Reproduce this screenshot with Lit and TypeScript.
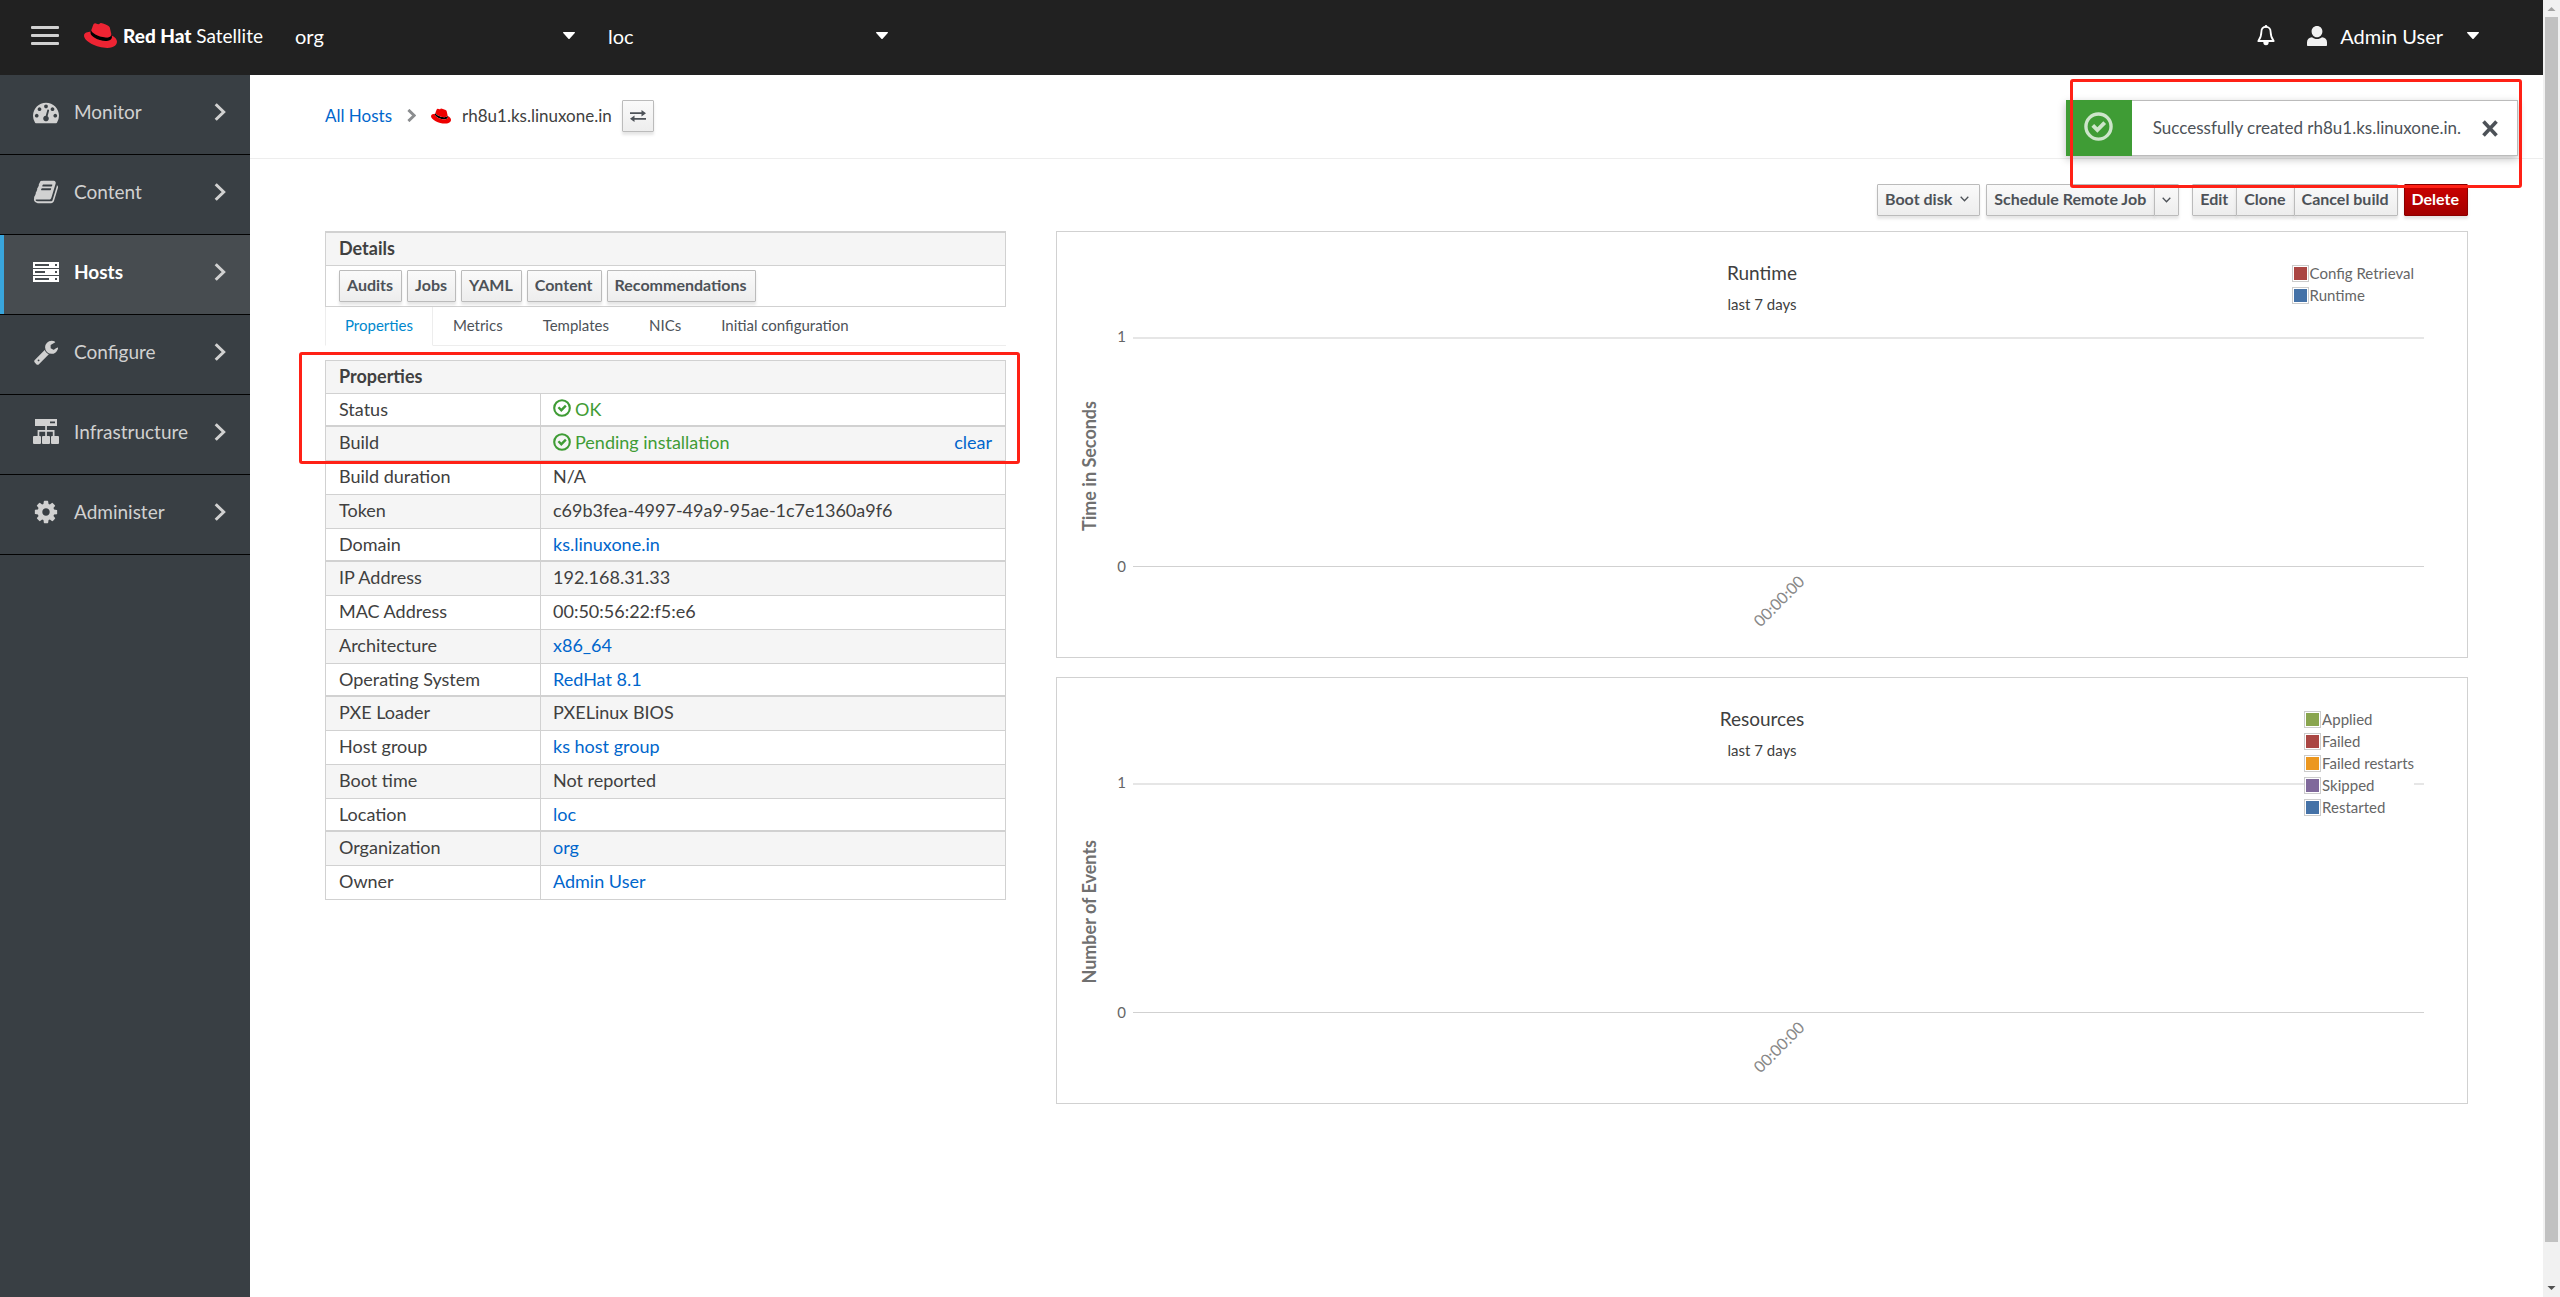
import { LitElement, html, css, svg, nothing, type TemplateResult } from "lit";
import { customElement, property } from "lit/decorators.js";
import { classMap } from "lit/directives/class-map.js";

interface NavItem { label: string; icon: TemplateResult; active?: boolean }
interface Prop { label: string; value: string; kind?: "link" | "ok"; action?: string }
interface Series { name: string; color: string }

const FA = "0 0 1792 1792";

const icons = {
  monitor: svg`<svg class="nav-icon" viewBox=${FA} aria-hidden="true"><path d="M384 1152q0-53-37.5-90.5t-90.5-37.5-90.5 37.5-37.5 90.5 37.5 90.5 90.5 37.5 90.5-37.5 37.5-90.5zm192-448q0-53-37.5-90.5t-90.5-37.5-90.5 37.5-37.5 90.5 37.5 90.5 90.5 37.5 90.5-37.5 37.5-90.5zm428 481l101-382q6-26-7.5-48.5t-38.5-29.5-48 6.5-30 39.5l-101 382q-60 5-107 43.5t-63 98.5q-20 77 20 146t117 89 146-20 89-117q16-60-6-117t-72-91zm660-33q0-53-37.5-90.5t-90.5-37.5-90.5 37.5-37.5 90.5 37.5 90.5 90.5 37.5 90.5-37.5 37.5-90.5zm-640-640q0-53-37.5-90.5t-90.5-37.5-90.5 37.5-37.5 90.5 37.5 90.5 90.5 37.5 90.5-37.5 37.5-90.5zm448 192q0-53-37.5-90.5t-90.5-37.5-90.5 37.5-37.5 90.5 37.5 90.5 90.5 37.5 90.5-37.5 37.5-90.5zm320 448q0 261-141 483-19 29-54 29h-1402q-35 0-54-29-141-221-141-483 0-182 71-348t191-286 286-191 348-71 348 71 286 191 191 286 71 348z"/></svg>`,
  content: svg`<svg class="nav-icon" viewBox=${FA} aria-hidden="true"><path d="M1703 478q40 57 18 129l-275 906q-19 64-76.5 107.5t-122.5 43.5h-923q-77 0-148.5-53.5t-99.5-131.5q-24-67-2-127 0-4 3-27t4-37q1-8-3-21.5t-3-19.5q2-11 8-21t16.5-23.5 16.5-23.5q23-38 45-91.5t30-91.5q3-10 .5-30t-.5-28q3-11 17-28t17-23q21-36 42-92t25-90q1-9-2.5-32t.5-28q4-13 22-30.5t22-22.5q19-26 42.5-84.5t27.5-96.5q1-8-3-25.5t-2-26.5q2-8 9-18t18-23 17-21q8-12 16.5-30.5t15-35 16-36 19.5-32 26.5-23.5 36-11.5 47.5 5.5l-1 3q38-9 51-9h761q74 0 114 56t18 130l-274 906q-36 119-71.5 153.5t-128.5 34.5h-869q-27 0-38 15-11 16-1 43 24 70 144 70h923q29 0 56-15.5t35-41.5l300-987q7-22 5-57 38 15 59 43zm-1064 2q-4 13 2 22.5t20 9.5h608q13 0 25.5-9.5t16.5-22.5l21-64q4-13-2-22.5t-20-9.5h-608q-13 0-25.5 9.5t-16.5 22.5zm-83 256q-4 13 2 22.5t20 9.5h608q13 0 25.5-9.5t16.5-22.5l21-64q4-13-2-22.5t-20-9.5h-608q-13 0-25.5 9.5t-16.5 22.5z"/></svg>`,
  hosts: svg`<svg class="nav-icon" viewBox="0 0 26 26" aria-hidden="true"><path fill-rule="evenodd" d="M0 3h26v6H0zM2 5h14v2H2zM22 5h2v2h-2zM0 10h26v6H0zM2 12h10v2H2zM22 12h2v2h-2zM0 17h26v6H0zM2 19h14v2H2zM22 19h2v2h-2z"/></svg>`,
  configure: svg`<svg class="nav-icon" viewBox=${FA} aria-hidden="true"><path d="M448 1472q0-26-19-45t-45-19-45 19-19 45 19 45 45 19 45-19 19-45zm644-420l-682 682q-37 37-90 37-52 0-91-37l-106-108q-38-36-38-90 0-53 38-91l681-681q39 98 114.5 173.5t173.5 114.5zm634-435q0 39-23 106-47 134-164.5 217.5t-258.5 83.5q-185 0-316.5-131.5t-131.5-316.5 131.5-316.5 316.5-131.5q58 0 121.5 16.5t107.5 46.5q16 11 16 28t-16 28l-293 169v224l193 107q5-3 79-48.5t135.5-81 70.5-35.5q15 0 23.5 10t8.5 25z"/></svg>`,
  infrastructure: svg`<svg class="nav-icon" viewBox="0 0 26 26" aria-hidden="true"><path fill-rule="evenodd" d="M2 0h22v7H2zM17 2.600h5v1.600h-5zM12.200 7h1.700v4h7.600v6h-1.700v-4.300h-5.900V17h-1.700v-4.300H6.300V17H4.600v-6h7.600z"/><rect y="17" width="8" height="8" rx="1"/><rect x="9" y="17" width="8" height="8" rx="1"/><rect x="18" y="17" width="8" height="8" rx="1"/></svg>`,
  administer: svg`<svg class="nav-icon" viewBox=${FA} aria-hidden="true"><path d="M1152 896q0-106-75-181t-181-75-181 75-75 181 75 181 181 75 181-75 75-181zm512-109v222q0 12-8 23t-20 13l-185 28q-19 54-39 91 35 50 107 138 10 12 10 25t-9 23q-27 37-99 108t-94 71q-12 0-26-9l-138-108q-44 23-91 38-16 136-29 186-7 28-36 28h-222q-14 0-24.5-8.5t-11.5-21.5l-28-184q-49-16-90-37l-141 107q-10 9-25 9-14 0-25-11-126-114-165-168-7-10-7-23 0-12 8-23 15-21 51-66.5t54-70.5q-27-50-41-99l-183-27q-13-2-21-12.5t-8-23.5v-222q0-12 8-23t19-13l186-28q14-46 39-92-40-57-107-138-10-12-10-24 0-10 9-23 26-36 98.5-107.5t94.5-71.5q13 0 26 10l138 107q44-23 91-38 16-136 29-186 7-28 36-28h222q14 0 24.5 8.500t11.500 21.500l28 184q49 16 90 37l142-107q9-9 24-9 13 0 25 10 129 119 165 170 7 8 7 22 0 12-8 23-15 21-51 66.500t-54 70.500q26 50 41 98l183 28q13 2 21 12.500t8 23.500z"/></svg>`,
};

const hat = (cls: string, color: string) => html`<svg class=${cls} viewBox="0 2.900 24 18.200" aria-hidden="true">
  <path d="M20.110 11.951c.218 1.032.218 1.140.218 1.277 0 1.765-1.984 2.745-4.593 2.745-5.895.004-11.060-3.451-11.060-5.734a2.326 2.326 0 0 1 .190-.925L5.300 8.410c0 1.162 4.577 4.974 10.710 4.974 1.577 0 3.860-.326 3.860-2.202z" fill="#000"/>
  <path fill=${color} d="M16.009 13.386c1.577 0 3.860-.326 3.860-2.202a1.765 1.765 0 0 0-.040-.431l-.940-4.080c-.216-.898-.406-1.305-1.982-2.093-1.223-.625-3.888-1.658-4.676-1.658-.733 0-.947.946-1.822.946-.842 0-1.467-.706-2.255-.706-.757 0-1.250.515-1.630 1.576 0 0-1.060 2.990-1.197 3.424a.810.810 0 0 0-.028.245c0 1.162 4.577 4.974 10.710 4.974m4.101-1.435c.218 1.032.218 1.140.218 1.277 0 1.765-1.984 2.745-4.593 2.745-5.895.004-11.060-3.451-11.060-5.734a2.326 2.326 0 0 1 .190-.925C2.746 9.415 0 9.794 0 12.217c0 3.969 9.405 8.861 16.851 8.861 5.710 0 7.149-2.582 7.149-4.620 0-1.605-1.387-3.425-3.887-4.512"/></svg>`;

const caret = html`<svg class="caret" viewBox="0 0 12 7" aria-hidden="true"><path d="M.5 0h11c.5 0 .6.500.3.900L6.600 6.700a.8.8 0 0 1-1.200 0L.2.900C-.1.500 0 0 .5 0z"/></svg>`;
const okIcon = (cls: string) => html`<svg class=${cls} viewBox="0 0 18 18" aria-hidden="true"><circle cx="9" cy="9" r="7.800" fill="none" stroke="currentColor" stroke-width="2.100"/><path d="M4.600 9.100l1.700-1.700 2 2 3.700-3.700 1.700 1.700-5.400 5.500z" fill="currentColor"/></svg>`;
const chevronDown = html`<svg class="chev-down" viewBox="0 0 9 6" aria-hidden="true"><path d="M.7.800l3.800 4 3.800-4" fill="none" stroke="currentColor" stroke-width="1.300"/></svg>`;
const chevronRight = html`<svg class="chev-right" viewBox="0 0 12 18" aria-hidden="true"><path d="M1.700 1.200l8 7.800-8 7.800" fill="none" stroke="currentColor"/></svg>`;

/** Line chart without samples: axes, captions and legend only. */
@customElement("report-chart")
class ReportChart extends LitElement {
  @property() heading = "";
  @property() axis = "";
  @property({ attribute: false }) series: Series[] = [];

  static styles = css`
    :host { display: block; }
    .chart { position: relative; margin: 0; border: 1px solid #d1d1d1; box-sizing: border-box; height: 427px; color: #404040; }
    .caption { display: flex; flex-direction: column; align-items: center; height: 105px; padding-top: 29px; box-sizing: border-box; }
    .title { font-size: 19px; line-height: 24px; }
    .sub { font-size: 15px; line-height: 20px; padding-top: 9px; }
    .body { display: grid; grid-template-columns: 69px 1fr; padding: 0 43px 0 0; }
    .scale { display: flex; align-items: center; justify-content: space-between; padding: 0 0 0 20px; height: 230px; box-sizing: border-box; }
    .axis { writing-mode: vertical-rl; transform: rotate(180deg); font-size: 18px; line-height: 24px; font-weight: 700; color: #707070; padding-bottom: 28px; }
    .ticks { display: flex; flex-direction: column; justify-content: space-between; margin: -10px 0 -8px; height: 248px; font-size: 15px; line-height: 18px; color: #666; text-align: right; }
    .plot { margin-left: 7px; height: 230px; box-sizing: border-box; border-top: 2px solid #e6e6e6; border-bottom: 1px solid #d1d1d1; }
    .xlabel { grid-column: 2; justify-self: center; margin-left: 7px; padding-top: 24px; color: #888; font-size: 16px; line-height: 20px; }
    .xlabel span { display: block; transform: rotate(-45deg); }
    .legend { position: absolute; top: 30px; right: 53px; margin: 0; padding: 0; list-style: none; font-size: 15px; line-height: 22px; color: #666; background: #fff; }
    .legend li { display: flex; align-items: center; height: 22px; }
    .swatch { width: 13px; height: 13px; padding: 1px; border: 1px solid #ccc; margin-right: 1px; }
    .swatch rect { width: 100%; height: 100%; }
  `;

  render() {
    return html`<figure class="chart">
      <figcaption class="caption"><span class="title">${this.heading}</span><span class="sub">last 7 days</span></figcaption>
      <div class="body">
        <div class="scale"><span class="axis">${this.axis}</span><div class="ticks"><span>1</span><span>0</span></div></div>
        <div class="plot"></div>
        <div class="xlabel"><span>00:00:00</span></div>
      </div>
      <ul class="legend">${this.series.map(s => html`<li><svg class="swatch" aria-hidden="true"><rect fill=${s.color}></rect></svg>${s.name}</li>`)}</ul>
    </figure>`;
  }
}

@customElement("app-root")
class AppRoot extends LitElement {
  private nav: NavItem[] = [
    { label: "Monitor", icon: icons.monitor },
    { label: "Content", icon: icons.content },
    { label: "Hosts", icon: icons.hosts, active: true },
    { label: "Configure", icon: icons.configure },
    { label: "Infrastructure", icon: icons.infrastructure },
    { label: "Administer", icon: icons.administer },
  ];
  private props: Prop[] = [
    { label: "Status", value: "OK", kind: "ok" },
    { label: "Build", value: "Pending installation", kind: "ok", action: "clear" },
    { label: "Build duration", value: "N/A" },
    { label: "Token", value: "c69b3fea-4997-49a9-95ae-1c7e1360a9f6" },
    { label: "Domain", value: "ks.linuxone.in", kind: "link" },
    { label: "IP Address", value: "192.168.31.33" },
    { label: "MAC Address", value: "00:50:56:22:f5:e6" },
    { label: "Architecture", value: "x86_64", kind: "link" },
    { label: "Operating System", value: "RedHat 8.1", kind: "link" },
    { label: "PXE Loader", value: "PXELinux BIOS" },
    { label: "Host group", value: "ks host group", kind: "link" },
    { label: "Boot time", value: "Not reported" },
    { label: "Location", value: "loc", kind: "link" },
    { label: "Organization", value: "org", kind: "link" },
    { label: "Owner", value: "Admin User", kind: "link" },
  ];
  private runtime: Series[] = [
    { name: "Config Retrieval", color: "#aa4643" },
    { name: "Runtime", color: "#4572a7" },
  ];
  private resources: Series[] = [
    { name: "Applied", color: "#89a54e" },
    { name: "Failed", color: "#aa4643" },
    { name: "Failed restarts", color: "#ec971f" },
    { name: "Skipped", color: "#80699b" },
    { name: "Restarted", color: "#4572a7" },
  ];

  static styles = css`
    :host { display: block; font: 18px/24px Lato, "Open Sans", sans-serif; color: #404040; background: #fff; }
    a { color: #06c; text-decoration: none; }
    button { font: inherit; cursor: pointer; }
    svg { display: block; flex: none; }
    .frame { display: grid; grid-template-columns: minmax(0, 1fr) 17px; min-height: 100vh; }
    .page { position: relative; display: grid; grid-template-rows: 75px 1fr; }

    .topbar { display: flex; align-items: center; background: #212121; color: #fff; padding: 0 64px 4px 31px; font-size: 20px; }
    .burger { display: flex; flex-direction: column; gap: 5px; width: 28px; padding: 0; border: 0; background: none; }
    .burger span { height: 3px; background: #d1d1d1; border-radius: 1px; }
    .brand { display: flex; align-items: center; gap: 6px; margin: 0 34px 0 25px; width: 177px; color: #fff; font-size: 19px; white-space: nowrap; }
    .brand-hat { width: 33px; height: 25px; }
    .brand b { font-weight: 900; }
    .picker { display: grid; align-items: center; width: 280px; margin-right: 33px; }
    .picker select { grid-area: 1 / 1; appearance: none; border: 0; padding: 0; margin: 0; background: none; color: #fff; font: inherit; line-height: 28px; }
    .picker .caret { grid-area: 1 / 1; justify-self: end; pointer-events: none; }
    .caret { width: 12px; height: 7px; fill: #fff; }
    .tools { display: flex; align-items: center; margin-left: auto; gap: 32px; }
    .tools button { display: flex; align-items: center; border: 0; padding: 0; background: none; color: #fff; }
    .bell { width: 18px; height: 21px; }
    .person { width: 20px; height: 20px; margin-right: 13px; }
    .tools .caret { margin-left: 24px; }

    .lower { display: grid; grid-template-columns: 250px minmax(0, 1fr); }
    .sidebar { background: #393f44; }
    .sidebar ul { list-style: none; margin: 0; padding: 0; }
    .nav-link { display: flex; align-items: center; height: 79px; padding: 0 24px 6px 33px; box-sizing: border-box; color: #d1d1d1; font-size: 19px; }
    .nav-row { border-bottom: 1px solid #030303; }
    .nav-row.active { background: #474c50; box-shadow: inset 4px 0 0 #39a5dc; }
    .nav-row.active .nav-link { color: #fff; font-weight: 700; }
    .nav-icon { width: 26px; height: 26px; fill: currentColor; margin-right: 15px; }
    .nav-link .chev-right { margin-left: auto; width: 12px; height: 18px; color: #d1d1d1; }
    .chev-right path { stroke-width: 3px; }

    .crumbs { display: flex; align-items: center; height: 84px; box-sizing: border-box; padding: 0 75px 2px; border-bottom: 1px solid #ededed; font-size: 17px; }
    .crumbs .chev-right { width: 9px; height: 13px; margin: 0 15px; color: #8b8d8f; }
    .crumbs .chev-right path { stroke-width: 4px; }
    .crumb-hat { width: 20px; height: 16px; margin-right: 11px; }
    .host { margin-right: 10px; }
    .btn { display: inline-flex; align-items: center; height: 32px; box-sizing: border-box; padding: 0 8px 2px 7px; border: 1px solid #bbb; border-radius: 1px; background: linear-gradient(#fafafa, #ededed); box-shadow: 0 3px 3px rgba(3, 3, 3, 0.1); color: #4d5258; font-size: 16px; line-height: 20px; font-weight: 700; white-space: nowrap; }
    .btn.swap { padding: 0 7px; }
    .swap svg { width: 16px; height: 12px; fill: #4d5258; }
    .btn.danger { background: linear-gradient(#c00, #a30000); border-color: #8b0000; color: #fff; }
    .chev-down { width: 9px; height: 6px; }
    .btn .chev-down { margin: 0 2px 0 8px; }
    .btn.toggle { padding: 0 7px; }
    .btn.toggle .chev-down { margin: 0; }

    .content { padding: 25px 75px; }
    .actions { display: flex; justify-content: flex-end; margin-bottom: 15px; gap: 6px; }
    .group { display: flex; }
    .group .btn + .btn { margin-left: -1px; }
    .group + .group { margin-left: 7px; }
    .columns { display: grid; grid-template-columns: minmax(0, 1fr) minmax(0, 2fr); margin: 0 -25px; }
    .col { padding: 0 25px; }
    .charts { display: grid; gap: 19px; align-content: start; }

    .details { border: 1px solid #d1d1d1; border-top-width: 2px; }
    .head { margin: 0; padding: 0 13px 2px; height: 30px; line-height: 30px; background: #f5f5f5; border-bottom: 1px solid #d1d1d1; font-size: 18px; font-weight: 700; }
    .bar { display: flex; gap: 5px; padding: 4px 13px; }
    .tabs { display: flex; font-size: 15px; line-height: 36px; }
    .tab { border: 0; border-bottom: 1px solid #ededed; background: none; padding: 0 20px 2px; color: #4d5258; }
    .tab.active { border-left: 1px solid #ededed; border-right: 1px solid #ededed; border-bottom-color: #fff; color: #0088ce; padding: 0 19px 2px; }
    .tabs::after { content: ""; flex: 1; border-bottom: 1px solid #ededed; }

    .sheet { position: relative; margin-top: 14px; }
    .props { width: 100%; border-collapse: separate; border-spacing: 0; border: 1px solid #d1d1d1; border-bottom: 0; table-layout: fixed; }
    .name-col { width: 215px; }
    .props th { font-weight: 400; text-align: left; }
    .props thead th { padding: 0 13px 2px; height: 30px; background: #f5f5f5; border-bottom: 1px solid #d1d1d1; font-weight: 700; line-height: 30px; }
    .props .name { border-right: 1px solid #d1d1d1; }
    .props tbody th, .props td { box-sizing: border-box; padding: 0 13px 3px; height: 34px; border-bottom: 1px solid #d1d1d1; line-height: 28px; }
    .props tbody td { padding-left: 12px; }
    .props tbody tr:nth-child(even) { background: #f5f5f5; }
    .props tbody tr:nth-child(4n + 1) > * { border-bottom-width: 2px; padding-bottom: 2px; height: 33px; }
    .cell { display: flex; align-items: center; height: 28px; }
    .cell.ok { color: #3f9c35; }
    .cell-ok { width: 18px; height: 18px; margin: 0 4px 1px 0; }
    .cell a.clear { margin-left: auto; }
    .mark { position: absolute; box-sizing: border-box; border: 3px solid #ff2116; border-radius: 3px; pointer-events: none; }
    .sheet .mark { top: -8px; left: -26px; right: -14px; height: 112px; }

    .toast { position: absolute; top: 100px; right: 25px; display: flex; height: 56px; background: #fff; box-shadow: 0 3px 8px rgba(3, 3, 3, 0.25); }
    .toast-badge { display: flex; align-items: center; justify-content: center; width: 66px; background: #3f9c35; color: rgba(255, 255, 255, 0.74); }
    .toast-ok { width: 29px; height: 29px; margin-bottom: 4px; }
    .toast-body { display: flex; align-items: center; gap: 20px; border: 1px solid #bbb; border-left: 0; padding: 0 18px 0 21px; font-size: 17px; color: #4d5258; }
    .close { border: 0; padding: 0; background: none; }
    .close svg { width: 18px; height: 17px; }
    .toast .mark { top: -21px; left: 4px; right: -4px; bottom: -32px; }

    .scroll { display: flex; flex-direction: column; height: 100vh; background: #f1f1f1; }
    .scroll svg { width: 17px; height: 17px; }
    .track { flex: 1; padding: 0 2px; }
    .thumb { height: 97%; background: #c1c1c1; }
  `;

  private renderValue(p: Prop) {
    if (p.kind === "link") return html`<a href="#">${p.value}</a>`;
    if (p.kind === "ok") return html`<div class="cell ok">${okIcon("cell-ok")}${p.value}${p.action ? html`<a class="clear" href="#">${p.action}</a>` : nothing}</div>`;
    return p.value;
  }

  render() {
    return html`<div class="frame">
      <div class="page">
        <header class="topbar">
          <button class="burger" aria-label="Toggle navigation"><span></span><span></span><span></span></button>
          <a class="brand" href="#">${hat("brand-hat", "#ee2433")}<span><b>Red Hat</b> Satellite</span></a>
          <div class="picker"><select aria-label="Organization"><option>org</option></select>${caret}</div>
          <div class="picker"><select aria-label="Location"><option>loc</option></select>${caret}</div>
          <div class="tools">
            <button aria-label="Notifications"><svg class="bell" viewBox="0 0 18 21"><path d="M9 1.800c-3 0-4.600 2.300-4.600 5 0 4.700-1.200 6.800-3.100 9.200h15.400c-1.900-2.400-3.100-4.500-3.100-9.200 0-2.700-1.600-5-4.600-5z" fill="none" stroke="#fff" stroke-width="1.800" stroke-linejoin="round"/><path d="M9 0a1.300 1.300 0 0 1 1.300 1.300V2.500H7.700V1.300A1.300 1.300 0 0 1 9 0zM6.300 17h5.400a2.700 3.200 0 0 1-5.400 0z" fill="#fff"/></svg></button>
            <button><svg class="person" viewBox="0 0 20 20" aria-hidden="true"><path fill="#f0f0f0" d="M10 0c3.300 0 5.400 2.500 5.400 5.400S13.300 11.200 10 11.200 4.600 8.300 4.600 5.400 6.700 0 10 0zM5 11.200c1.400 1.200 3.100 1.800 5 1.800s3.600-.6 5-1.800c3 .4 5 2.200 5 5V19c0 .600-.4 1-1 1H1c-.6 0-1-.4-1-1v-2.800c0-2.800 2-4.600 5-5z"/></svg>Admin User${caret}</button>
          </div>
        </header>
        <div class="lower">
          <nav class="sidebar"><ul>
            ${this.nav.map(n => html`<li class=${classMap({ "nav-row": true, active: !!n.active })}><a class="nav-link" href="#">${n.icon}${n.label}${chevronRight}</a></li>`)}
          </ul></nav>
          <main>
            <div class="crumbs">
              <a href="#">All Hosts</a>${chevronRight}${hat("crumb-hat", "#e00")}<span class="host">rh8u1.ks.linuxone.in</span>
              <button class="btn swap" aria-label="Switch host"><svg viewBox="0 0 16 12"><path d="M0 2.300h11.500V0L16 3.200l-4.500 3.200V4.100H0zM16 9.700H4.500V12L0 8.800l4.500-3.200v2.300H16z"/></svg></button>
            </div>
            <div class="content">
              <div class="actions">
                <button class="btn">Boot disk${chevronDown}</button>
                <div class="group"><button class="btn">Schedule Remote Job</button><button class="btn toggle" aria-label="More jobs">${chevronDown}</button></div>
                <div class="group"><button class="btn">Edit</button><button class="btn">Clone</button><button class="btn">Cancel build</button></div>
                <button class="btn danger">Delete</button>
              </div>
              <div class="columns">
                <div class="col">
                  <section class="details">
                    <h2 class="head">Details</h2>
                    <div class="bar">${["Audits", "Jobs", "YAML", "Content", "Recommendations"].map(b => html`<button class="btn">${b}</button>`)}</div>
                  </section>
                  <div class="tabs">${["Properties", "Metrics", "Templates", "NICs", "Initial configuration"].map((t, i) => html`<button class=${classMap({ tab: true, active: i === 0 })}>${t}</button>`)}</div>
                  <div class="sheet">
                    <table class="props">
                      <colgroup><col class="name-col"><col></colgroup>
                      <thead><tr><th colspan="2">Properties</th></tr></thead>
                      <tbody>${this.props.map(p => html`<tr><th class="name" scope="row">${p.label}</th><td>${this.renderValue(p)}</td></tr>`)}</tbody>
                    </table>
                    <div class="mark"></div>
                  </div>
                </div>
                <div class="col charts">
                  <report-chart heading="Runtime" axis="Time in Seconds" .series=${this.runtime}></report-chart>
                  <report-chart heading="Resources" axis="Number of Events" .series=${this.resources}></report-chart>
                </div>
              </div>
            </div>
          </main>
        </div>
        <div class="toast" role="status">
          <div class="toast-badge">${okIcon("toast-ok")}</div>
          <div class="toast-body">Successfully created rh8u1.ks.linuxone.in.
            <button class="close" aria-label="Close"><svg viewBox="0 0 17 17"><path d="M2 1.500l13 14M15 1.500l-13 14" stroke="#4d5258" stroke-width="3.600"/></svg></button>
          </div>
          <div class="mark"></div>
        </div>
      </div>
      <div class="scroll" aria-hidden="true">
        <svg viewBox="0 0 17 17"><path d="M4.500 11L8.500 7l4 4z" fill="#a3a3a3"/></svg>
        <div class="track"><div class="thumb"></div></div>
        <svg viewBox="0 0 17 17"><path d="M4.500 6l4 4 4-4z" fill="#505050"/></svg>
      </div>
    </div>`;
  }
}
